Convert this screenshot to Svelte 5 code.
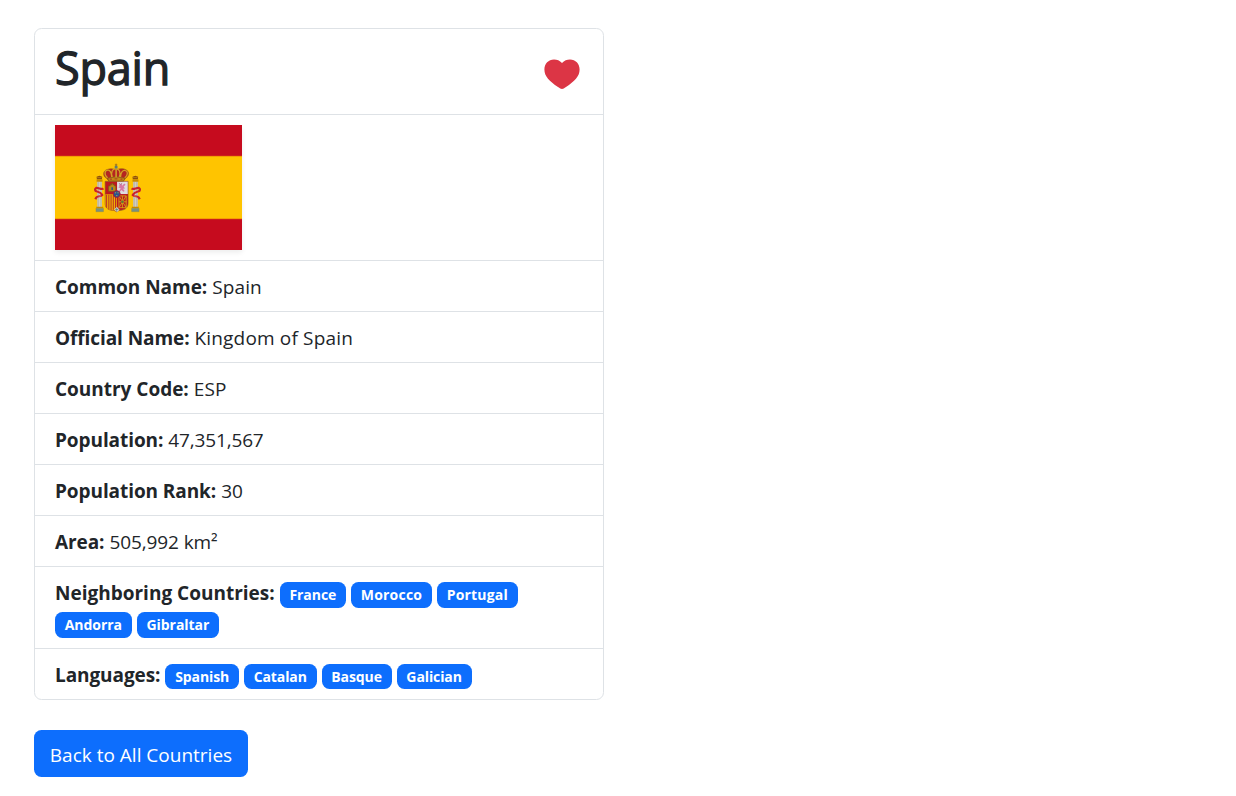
<script>
  const facts = [
    ['Common Name:', 'Spain'],
    ['Official Name:', 'Kingdom of Spain'],
    ['Country Code:', 'ESP'],
    ['Population:', '47,351,567'],
    ['Population Rank:', '30'],
    ['Area:', '505,992 km²']
  ];
  const neighbors = ['France', 'Morocco', 'Portugal', 'Andorra', 'Gibraltar'];
  const languages = ['Spanish', 'Catalan', 'Basque', 'Galician'];
</script>

<main>
  <section class="card">
    <header>
      <h1>Spain</h1>
      <svg class="heart" viewBox="0 0 36 30" aria-label="Favorite">
        <path d="M18 3.900C20.200 1.500 23 .4 26 .4C31.500 .4 35.600 4.700 35.600 10.400C35.600 17.500 30.500 21.800 22 28.100C20.200 29.500 19.200 29.900 18 29.900C16.800 29.900 15.800 29.500 14 28.100C5.500 21.800 .4 17.500 .4 10.400C.4 4.700 4.500 .4 10 .4C13 .4 15.800 1.500 18 3.900Z" fill="#dc3545" />
      </svg>
    </header>
    <div class="row">
      <svg class="flag" viewBox="0 0 187 125" aria-label="Flag of Spain">
        <rect width="187" height="125" fill="#c60b1e" />
        <rect y="31" width="187" height="63" fill="#ffc400" />
        <path d="M0 31.300H187M0 93.700H187" stroke="#ed8908" stroke-width=".8" />
        <g transform="translate(31.500 30.600) scale(.315 .31)">
          <path d="M34 82H49V168H34ZM148 82H163V168H148Z" fill="#d2cdc0" />
          <path d="M37 84V166M46 84V166M151 84V166M160 84V166" stroke="#9b9b91" stroke-width="2" />
          <path d="M32 77H51V84H32ZM146 77H165V84H146ZM31 165H53V169H31ZM144 165H166V169H144Z" fill="#c88a00" />
          <path d="M30 170H54V181H30ZM143 170H167V181H143Z" fill="#789080" stroke="#8a8740" />
          <path d="M33 76L32 68L41 65L50 68L49 76ZM147 76L146 68L155 65L164 68L163 76Z" fill="#8b4d0d" />
          <path d="M34 71H48M148 71H162" stroke="#d09b17" stroke-width="2" />
          <path d="M54 106C48 111 39 103 31 104Q25 108 29 114C37 116 48 122 50 127C45 133 34 129 31 135L28 141M143 106C149 111 158 103 166 104Q172 108 168 114C160 116 149 122 147 127C152 133 163 129 166 135L169 141" fill="none" stroke="#c9232c" stroke-width="7" />
          <path d="M33 111L47 117M150 117L163 111M38 130H46M151 130H159" stroke="#e8ad88" stroke-width="2" />
          <path d="M59 83H132V154C132 167 123 175 112 176C103 177 99 178 96 182C92 178 87 177 79 176C67 175 59 167 59 154Z" fill="#bc1820" stroke="#8c6b28" stroke-width="2" />
          <path d="M97 84H131V124H97Z" fill="#dedbe0" />
          <path d="M60 125H96V176C76 178 60 173 60 155Z" fill="#f1b900" />
          <path d="M64 126V168M71 126V173M78 126V176M85 126V175M92 126V175" stroke="#b6212a" stroke-width="3" />
          <path d="M70 115V98H75V94H80V90H84V94H89V98H93V115Z" fill="#b78919" stroke="#765c1b" stroke-width="2" />
          <path d="M79 102H84V111H79Z" fill="#27598d" />
          <path d="M104 95L111 91L113 97L120 90L124 94L118 100L122 106L116 107L121 114L117 117L111 111L105 118L104 112L109 106L101 102L105 99L103 94Z" fill="#d878a5" />
          <path d="M103 90L108 93L113 90" stroke="#a5648b" stroke-width="3" fill="none" />
          <path d="M103 130H126V168H103ZM103 130L126 168M126 130L103 168M114 130V169M103 149H127" stroke="#d49a18" stroke-width="3" fill="none" />
          <circle cx="114" cy="149" r="4" fill="#587837" />
          <path d="M88 175L96 165L105 175L97 182Z" fill="#d9d7cd" />
          <path d="M96 168V180M91 174H101" stroke="#437561" stroke-width="2" />
          <circle cx="96" cy="124" r="11" fill="#28548e" stroke="#ad1833" stroke-width="3" />
          <path d="M90 120H94M98 120H102M94 129H98" stroke="#b49f50" stroke-width="3" />
          <path d="M64 74C50 65 52 50 65 45C75 41 84 42 94 46C105 41 121 40 130 49C138 59 131 68 123 75L117 81H70Z" fill="#b52620" stroke="#9a6910" stroke-width="2" />
          <path d="M67 72C54 61 58 46 69 47C78 47 79 59 80 69M82 70C76 52 83 43 93 42C104 43 110 53 104 70M108 70C108 55 115 46 123 48C134 52 130 65 121 72" fill="none" stroke="#d3a025" stroke-width="4" />
          <path d="M67 73Q94 64 122 73L118 82H71Z" fill="#c58816" stroke="#7c541b" stroke-width="2" />
          <path d="M94 45V70" stroke="#cda128" stroke-width="5" />
          <path d="M74 76H81M89 75H98M108 76H114" stroke="#a73422" stroke-width="3" />
          <circle cx="94" cy="37" r="5" fill="#567c83" />
          <path d="M94 26V35M90 30H98" stroke="#997019" stroke-width="3" />
        </g>
      </svg>
    </div>
    {#each facts as [label, value]}
      <div class="row fact"><strong>{label}</strong><span>{value}</span></div>
    {/each}
    <div class="row tags neighbors">
      <strong>Neighboring Countries:</strong>
      {#each neighbors as name}<a class="badge" href="#country">{name}</a>{/each}
    </div>
    <div class="row tags languages">
      <strong>Languages:</strong>
      {#each languages as name}<span class="badge">{name}</span>{/each}
    </div>
  </section>
  <button>Back to All Countries</button>
</main>

<style>
  :global(body) { background: #fff; }
  main {
    padding: 28px 34px;
    font: 400 19px/32px 'Open Sans', 'Noto Sans', sans-serif;
    color: #212529;
  }
  .card {
    box-sizing: border-box;
    width: 570px;
    border: 1px solid #dee2e6;
    border-radius: 7.5px;
  }
  header {
    display: flex;
    justify-content: space-between;
    height: 85px;
    padding: 0 23px 0 20px;
  }
  h1 {
    margin: 11px 0 0;
    font-size: 45px;
    font-weight: 400;
    line-height: 56px;
    letter-spacing: -.2px;
    -webkit-text-stroke: 1.3px #212529;
  }
  .heart { width: 36px; height: 30px; margin-top: 30px; }
  .row { border-top: 1px solid #dee2e6; padding: 10px 20px; }
  .flag {
    display: block;
    width: 187px;
    height: 125px;
    box-shadow: 0 2.5px 5px rgba(0, 0, 0, .075);
  }
  .fact { display: flex; gap: 5px; height: 30px; white-space: nowrap; }
  strong { font-weight: 700; letter-spacing: -.08px; }
  .fact span { letter-spacing: .12px; }
  .fact:nth-child(3) strong { letter-spacing: -.03px; }
  .fact:nth-child(5) strong { letter-spacing: -.02px; }
  .fact:nth-child(4) span { letter-spacing: .17px; }
  .fact:nth-child(6) span { letter-spacing: -.15px; }
  .fact:nth-child(8) span { letter-spacing: -.1px; }
  .tags { display: flex; flex-wrap: wrap; column-gap: 5px; }
  .tags strong { height: 30px; }
  .neighbors strong { letter-spacing: 0; }
  .neighbors { height: 61px; align-content: flex-start; }
  .languages { height: 30px; }
  .badge {
    box-sizing: border-box;
    height: 26px;
    margin: 5px 0 -1px;
    padding: 0 9.75px;
    border-radius: 7.5px;
    background: #0d6efd;
    color: #fff;
    font-size: 14px;
    font-weight: 700;
    line-height: 26px;
    letter-spacing: -.05px;
    text-decoration: none;
  }
  .neighbors .badge:nth-child(3),
  .neighbors .badge:nth-child(4) { letter-spacing: .2px; }
  .languages .badge { height: 25px; letter-spacing: -.1px; }
  button {
    display: block;
    width: 214px;
    height: 47px;
    margin-top: 30px;
    padding: 2px 0 0;
    border: 0;
    border-radius: 7.5px;
    background: #0d6efd;
    color: #fff;
    font: inherit;
    letter-spacing: 0;
  }
</style>
